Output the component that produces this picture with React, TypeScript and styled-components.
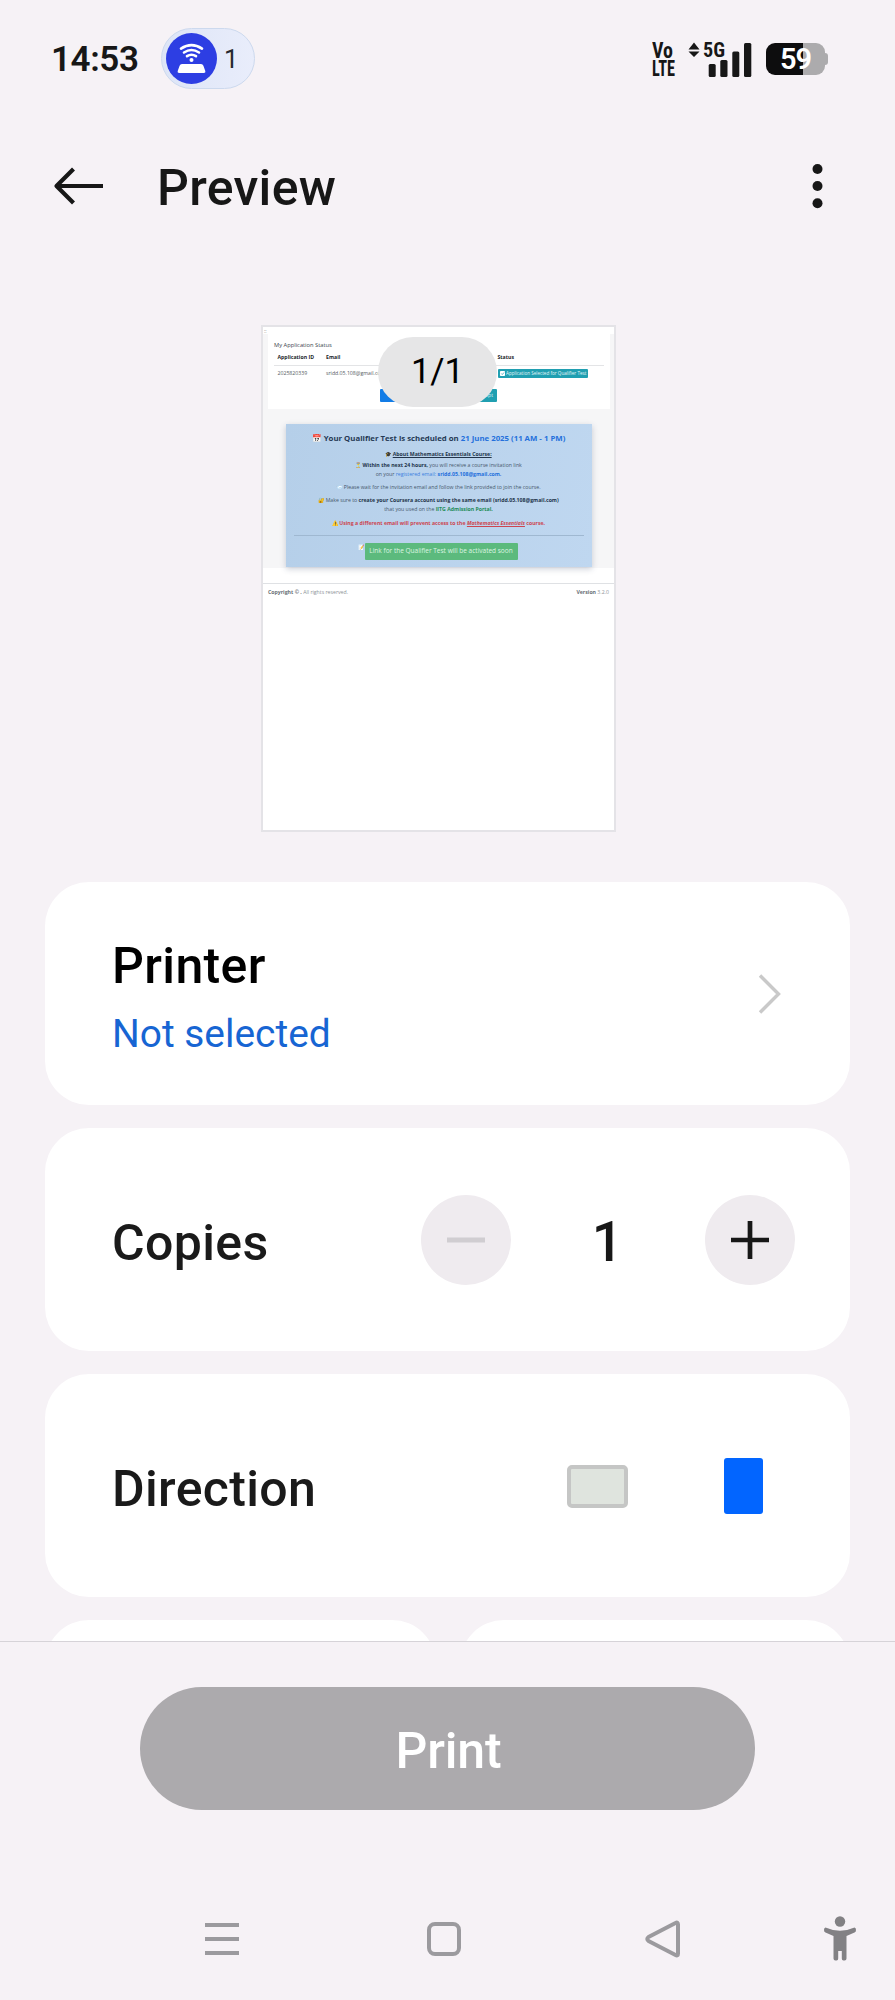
import React from "react";
import styled, { createGlobalStyle } from "styled-components";

const GlobalStyle = createGlobalStyle`
  *, *::before, *::after { box-sizing: border-box; }
  html, body { margin: 0; padding: 0; background: #f6f2f6; }
  body { font-family: Roboto, "Liberation Sans", sans-serif; color: #171717; }
  button { font: inherit; color: inherit; border: 0; margin: 0; padding: 0; }
`;

const Screen = styled.div`
  display: flex;
  flex-direction: column;
  width: 895px;
  height: 2000px;
  overflow: hidden;
  background: #f6f2f6;
`;

/* ---------- status bar ---------- */

const StatusBar = styled.header`
  display: flex;
  align-items: center;
  justify-content: space-between;
  height: 117px;
  padding: 0 67px 0 51px;
`;

const StatusGroup = styled.div`
  display: flex;
  align-items: center;
`;

const Clock = styled.span`
  width: 110px;
  padding-top: 2px;
  font-size: 35px;
  font-weight: 600;
  letter-spacing: -0.4px;
  line-height: 40px;
`;

const HotspotPill = styled.div`
  display: flex;
  align-items: center;
  gap: 7px;
  width: 94px;
  height: 61px;
  padding-left: 4px;
  border: 1px solid #ccd9ee;
  border-radius: 31px;
  background: linear-gradient(90deg, #dde5f7, #e9edfb);
  font-size: 25.5px;
  line-height: 32px;
  color: #26282e;
`;

const CondensedLabel = styled.text<{ $size: number }>`
  font-family: Roboto, sans-serif;
  font-size: ${(p) => p.$size}px;
  font-weight: 700;
  font-stretch: 75%;
  fill: #171717;
`;

const Battery = styled.div`
  display: flex;
  align-items: center;
`;

const BatteryBody = styled.div`
  display: flex;
  align-items: center;
  justify-content: center;
  width: 59px;
  height: 32px;
  border-radius: 9px;
  background: linear-gradient(90deg, #0d0d0e 63%, #acabad 63%);
  color: #fff;
  font-size: 29px;
  font-weight: 600;
  line-height: 32px;
  letter-spacing: -1px;
`;

const BatteryCap = styled.div`
  width: 3px;
  height: 12px;
  border-radius: 0 3px 3px 0;
  background: #acabad;
`;

/* ---------- app bar ---------- */

const AppBar = styled.div`
  display: flex;
  align-items: center;
  height: 138px;
  padding: 0 72px 0 53px;
`;

const Title = styled.h1`
  flex: 1;
  margin: 3px 0 0 54px;
  font-size: 50px;
  font-weight: 500;
  line-height: 60px;
  letter-spacing: 0.3px;
`;

/* ---------- document thumbnail ---------- */

const PreviewArea = styled.section`
  display: flex;
  justify-content: center;
  height: 627px;
  padding: 70px 18px 0 0;
`;

const Sheet = styled.article`
  position: relative;
  width: 355px;
  height: 507px;
  border: 2px solid #e4e3e7;
  background: #fff;
  font-family: "Open Sans", "Noto Sans", sans-serif;
  font-size: 5.2px;
  line-height: 9px;
  color: #3b444d;
  white-space: nowrap;
`;

const PageBadge = styled.div`
  position: absolute;
  top: 10px;
  left: 115px;
  width: 119px;
  height: 70px;
  border-radius: 35px;
  background: #e6e6e7;
  color: #000;
  font-family: Roboto, sans-serif;
  font-size: 34.5px;
  line-height: 69px;
  text-align: center;
`;

const SheetMark = styled.div`
  height: 7px;
  padding-left: 1px;
  font-size: 5px;
  line-height: 9px;
  color: #888;
`;

const SheetBody = styled.div`
  height: 234px;
  padding: 0 4px 0 5px;
  background: #f6f6f7;
`;

const StatusPanel = styled.div`
  height: 75px;
  padding: 7px 6px 0;
  background: #fff;
`;

const PanelTitle = styled.div`
  font-size: 5.75px;
  line-height: 9px;
`;

const TableRow = styled.div<{ $head?: boolean }>`
  display: grid;
  grid-template-columns: 48.5px 171.5px 1fr;
  align-items: center;
  height: ${(p) => (p.$head ? 16 : 15)}px;
  padding-left: 3.5px;
  padding-bottom: ${(p) => (p.$head ? 1 : 0)}px;
  border-bottom: ${(p) => (p.$head ? "1px solid #e3e4e6" : "0")};
  font-weight: ${(p) => (p.$head ? 700 : 400)};
  color: ${(p) => (p.$head ? "#22262a" : "#555c63")};
`;

const StatusTag = styled.span`
  display: flex;
  align-items: center;
  gap: 1px;
  width: 90px;
  height: 9px;
  padding-left: 2.5px;
  border-radius: 1px;
  background: #209fb1;
  color: #e2f6f8;
  font-size: 4.6px;
`;

const ActionRow = styled.div`
  display: flex;
  justify-content: space-between;
  width: 117px;
  margin: 8px 0 0 106px;
`;

const ActionButton = styled.span<{ $tone: string }>`
  width: 56px;
  height: 13px;
  padding: 0 4px;
  border-radius: 1px;
  background: ${(p) => p.$tone};
  color: #dff1fb;
  line-height: 13px;
  text-align: right;
`;

const Notice = styled.div`
  display: flex;
  flex-direction: column;
  align-items: center;
  width: 306px;
  height: 143px;
  margin: 15px 0 0 17.5px;
  padding: 7.5px 8px 0;
  background: linear-gradient(100deg, #b5cfe9, #bfd7f0);
  box-shadow: 0 2px 6px rgba(40, 60, 90, 0.24);
`;

const NoticeTitle = styled.div`
  font-size: 7.8px;
  font-weight: 700;
  line-height: 12px;
  color: #263a55;
`;

const NoticeLine = styled.div<{ $gap?: number; $alert?: boolean }>`
  margin-top: ${(p) => p.$gap ?? 0}px;
  color: ${(p) => (p.$alert ? "#cc4650" : "#46586c")};
  font-weight: ${(p) => (p.$alert ? 700 : 400)};

  b { color: #22344a; }
  u { color: #22344a; font-weight: 700; }
`;

const Tint = styled.span<{ $color: string; $bold?: boolean }>`
  color: ${(p) => p.$color};
  font-weight: ${(p) => (p.$bold ? 700 : "inherit")};
`;

const CourseName = styled.em`
  text-decoration: underline;
`;

const Divider = styled.div`
  width: 290px;
  height: 1px;
  margin: 7.5px 0 7px;
  background: #9fb8d1;
`;

const LinkRow = styled.div`
  display: flex;
  align-items: flex-start;
  gap: 1px;
  margin-right: 2px;
`;

const LinkButton = styled.span`
  width: 153px;
  height: 17px;
  border-radius: 1px;
  background: #5cba7d;
  color: #dcf5e2;
  font-size: 6.5px;
  line-height: 16.5px;
  text-align: center;
`;

const SheetFooter = styled.footer`
  display: flex;
  justify-content: space-between;
  margin-top: 15px;
  padding: 3.5px 5px 0;
  border-top: 1px solid #dfe1e4;
  color: #8d9297;

  b { color: #6a7076; }
`;

/* ---------- settings ---------- */

const Settings = styled.main`
  display: flex;
  flex-direction: column;
  gap: 23px;
  height: 759px;
  padding: 0 45px;
  overflow: hidden;
`;

const Card = styled.section`
  display: flex;
  flex-shrink: 0;
  align-items: center;
  justify-content: space-between;
  height: 223px;
  padding-left: 67px;
  border-radius: 44px;
  background: #fff;
`;

const CardPair = styled.div`
  display: grid;
  grid-template-columns: 1fr 1fr;
  flex-shrink: 0;
  gap: 24px;
`;

const PrinterText = styled.div`
  padding-top: 6px;
`;

const CardTitle = styled.h2<{ $strong?: boolean }>`
  margin: ${(p) => (p.$strong ? "0 0 14px" : "6px 0 0")};
  font-size: 50px;
  font-weight: 500;
  line-height: 60px;
  letter-spacing: 0.35px;
  color: ${(p) => (p.$strong ? "#000" : "#1a1a1a")};
`;

const PrinterValue = styled.p`
  margin: 0;
  font-size: 38.9px;
  line-height: 48px;
  color: #1765d3;
`;

const ChevronSlot = styled.div`
  display: flex;
  padding-right: 69px;
`;

const Stepper = styled.div`
  display: flex;
  align-items: center;
  padding-right: 55.5px;
`;

const StepButton = styled.button`
  display: flex;
  align-items: center;
  justify-content: center;
  width: 90px;
  height: 90px;
  border-radius: 50%;
  background: #efebef;
`;

const CopyCount = styled.span`
  width: 194px;
  padding-top: 4px;
  font-size: 55px;
  font-weight: 500;
  line-height: 64px;
  text-align: center;
`;

const DirectionOptions = styled.div`
  display: flex;
  align-items: center;
  gap: 96px;
  padding: 1px 87px 0 0;
`;

const Landscape = styled.button`
  width: 61px;
  height: 43px;
  border: 4.5px solid #c5c6c5;
  border-radius: 5px;
  background: #dfe4de;
`;

const Portrait = styled.button`
  width: 39px;
  height: 56px;
  border-radius: 3px;
  background: #0265ff;
`;

/* ---------- bottom ---------- */

const BottomBar = styled.footer`
  flex: 1;
  border-top: 1px solid #d6d3d8;
`;

const PrintButton = styled.button`
  display: block;
  width: 615px;
  height: 123px;
  margin: 45px 0 0 140px;
  padding: 5px 0 0 2px;
  border-radius: 62px;
  background: #acaaad;
  color: #fff;
  font-size: 50px;
  font-weight: 500;
  letter-spacing: -0.2px;
`;

const NavBar = styled.nav`
  display: grid;
  grid-template-columns: 222px 222px 216px 138px;
  justify-content: start;
  align-items: center;
  height: 60px;
  margin: 99px 0 0 111px;
`;

const NavItem = styled.div`
  display: flex;
  justify-content: center;
`;

const HotspotIcon = () => (
  <svg width="51" height="51" viewBox="0 0 51 51">
    <circle cx="25.5" cy="25.5" r="25.5" fill="#2d3ee3" />
    <g fill="none" stroke="#fff" strokeWidth="2.6" strokeLinecap="round">
      <path d="M15 15.6q10.5-7 21 0" />
      <path d="M18 19.5q7.5-5 15 0" />
      <path d="M21 23.2q4.5-3 9 0" />
    </g>
    <circle cx="25.5" cy="27" r="2" fill="#fff" />
    <path d="M16 31h19q1.8 0 2.4 1.8l1.8 5q.7 2.200-1.5 2.200H13.300q-2.200 0-1.5-2.200l1.8-5Q14.200 31 16 31Z" fill="#fff" />
  </svg>
);

const NetworkIcons = () => (
  <svg width="114" height="40" viewBox="0 0 114 40">
    <CondensedLabel $size={21.5}>
      <tspan x="0" y="19" textLength="21" lengthAdjust="spacingAndGlyphs">Vo</tspan>
      <tspan x="0" y="36.5" textLength="23" lengthAdjust="spacingAndGlyphs">LTE</tspan>
    </CondensedLabel>
    <path d="M36.500 10.500 42 3.500l5.500 7ZM36.500 12.500h11L42 18Z" fill="#171717" />
    <CondensedLabel $size={20.5} x="51" y="18" textLength="22" lengthAdjust="spacingAndGlyphs">5G</CondensedLabel>
    <g fill="#171717">
      <rect x="56.7" y="25" width="7" height="13" rx="1.5" />
      <rect x="68.3" y="21" width="7.2" height="17" rx="1.5" />
      <rect x="80.3" y="12.5" width="7" height="25.5" rx="1.5" />
      <rect x="92" y="4" width="7.3" height="34" rx="1.5" />
    </g>
  </svg>
);

const BackIcon = () => (
  <svg width="50" height="38" viewBox="0 0 50 38" fill="none" stroke="#171717" strokeWidth="4.2">
    <path d="M50 19H4M20.500 2 3.500 19l17 17" strokeLinejoin="round" />
  </svg>
);

const MoreIcon = () => (
  <svg width="11" height="46" viewBox="0 0 11 46" fill="#171717">
    <circle cx="5.5" cy="6" r="5" />
    <circle cx="5.5" cy="23" r="5" />
    <circle cx="5.5" cy="40.3" r="5" />
  </svg>
);

export default function App() {
  return (
    <Screen>
      <GlobalStyle />
      <StatusBar>
        <StatusGroup>
          <Clock>14:53</Clock>
          <HotspotPill>
            <HotspotIcon />1
          </HotspotPill>
        </StatusGroup>
        <StatusGroup>
          <NetworkIcons />
          <Battery>
            <BatteryBody>59</BatteryBody>
            <BatteryCap />
          </Battery>
        </StatusGroup>
      </StatusBar>

      <AppBar>
        <BackIcon />
        <Title>Preview</Title>
        <MoreIcon />
      </AppBar>

      <PreviewArea>
        <Sheet>
          <SheetMark>::</SheetMark>
          <SheetBody>
            <StatusPanel>
              <PanelTitle>My Application Status</PanelTitle>
              <TableRow $head>
                <span>Application ID</span>
                <span>Email</span>
                <span>Status</span>
              </TableRow>
              <TableRow>
                <span>2025820339</span>
                <span>sridd.05.108@gmail.com</span>
                <StatusTag>
                  <svg width="5" height="5" viewBox="0 0 10 10">
                    <rect width="10" height="10" rx="1.5" fill="#fff" />
                    <path d="m2.500 5 2 2 3.500-4" fill="none" stroke="#209fb1" strokeWidth="1.5" />
                  </svg>
                  Application Selected for Qualifier Test
                </StatusTag>
              </TableRow>
              <ActionRow>
                <ActionButton $tone="#127ce6" />
                <ActionButton $tone="#209fb1">Receipt</ActionButton>
              </ActionRow>
            </StatusPanel>
            <Notice>
              <NoticeTitle>
                📅 Your Qualifier Test is scheduled on <Tint $color="#2470dc">21 June 2025 (11 AM - 1 PM)</Tint>
              </NoticeTitle>
              <NoticeLine $gap={6}>
                🎓 <u>About Mathematics Essentials Course:</u>
              </NoticeLine>
              <NoticeLine $gap={2}>
                ⏳ <b>Within the next 24 hours,</b> you will receive a course invitation link
              </NoticeLine>
              <NoticeLine>
                on your <Tint $color="#3c7fe0">registered email: </Tint>
                <Tint $color="#2470dc" $bold>sridd.05.108@gmail.com.</Tint>
              </NoticeLine>
              <NoticeLine $gap={4}>
                📨 Please wait for the invitation email and follow the link provided to join the course.
              </NoticeLine>
              <NoticeLine $gap={4.5}>
                🔐 Make sure to <b>create your Coursera account using the same email (sridd.05.108@gmail.com)</b>
              </NoticeLine>
              <NoticeLine>
                that you used on the <Tint $color="#1d8b57" $bold>IITG Admission Portal.</Tint>
              </NoticeLine>
              <NoticeLine $gap={4.5} $alert>
                ⚠️ Using a different email will prevent access to the <CourseName>Mathematics Essentials</CourseName> course.
              </NoticeLine>
              <Divider />
              <LinkRow>
                📝<LinkButton>Link for the Qualifier Test will be activated soon</LinkButton>
              </LinkRow>
            </Notice>
          </SheetBody>
          <SheetFooter>
            <span><b>Copyright © .</b> All rights reserved.</span>
            <span><b>Version</b> 3.2.0</span>
          </SheetFooter>
          <PageBadge>1/1</PageBadge>
        </Sheet>
      </PreviewArea>

      <Settings>
        <Card>
          <PrinterText>
            <CardTitle $strong>Printer</CardTitle>
            <PrinterValue>Not selected</PrinterValue>
          </PrinterText>
          <ChevronSlot>
            <svg width="23" height="40" viewBox="0 0 23 40" fill="none" stroke="#c9c9c9" strokeWidth="3.4">
              <path d="m2 1.500 18.500 18.500L2 38.500" />
            </svg>
          </ChevronSlot>
        </Card>
        <Card>
          <CardTitle>Copies</CardTitle>
          <Stepper>
            <StepButton aria-label="Fewer copies">
              <svg width="38" height="38" viewBox="0 0 38 38">
                <path d="M0 19h38" stroke="#d0cdd1" strokeWidth="5" />
              </svg>
            </StepButton>
            <CopyCount>1</CopyCount>
            <StepButton aria-label="More copies">
              <svg width="38" height="38" viewBox="0 0 38 38">
                <path d="M0 19h38M19 0v38" stroke="#171717" strokeWidth="4.7" />
              </svg>
            </StepButton>
          </Stepper>
        </Card>
        <Card>
          <CardTitle>Direction</CardTitle>
          <DirectionOptions>
            <Landscape aria-label="Landscape" />
            <Portrait aria-label="Portrait" />
          </DirectionOptions>
        </Card>
        <CardPair>
          <Card />
          <Card />
        </CardPair>
      </Settings>

      <BottomBar>
        <PrintButton>Print</PrintButton>
        <NavBar>
          <NavItem>
            <svg width="34" height="34" viewBox="0 0 34 34" stroke="#9b9a9e" strokeWidth="4">
              <path d="M0 3h34M0 17h34M0 31h34" />
            </svg>
          </NavItem>
          <NavItem>
            <svg width="34" height="34" viewBox="0 0 34 34" fill="none" stroke="#9b9a9e" strokeWidth="4">
              <rect x="2" y="2" width="30" height="30" rx="6" />
            </svg>
          </NavItem>
          <NavItem>
            <svg width="36" height="38" viewBox="0 0 36 38" fill="none" stroke="#9b9a9e" strokeWidth="4" strokeLinejoin="round">
              <path d="M30.500 3Q33 1.500 33 4.500v29q0 3-2.500 1.500L3.500 21q-2.500-2 0-4Z" />
            </svg>
          </NavItem>
          <NavItem>
            <svg width="34" height="46" viewBox="0 0 34 46" fill="#828184">
              <circle cx="17" cy="5.5" r="5.2" />
              <path d="M2.500 11.500Q17 18 31.500 11.500q1.500 0 1.500 2.500 0 2-1.500 2.500L23.500 20v22.500q0 2-2 2h-1q-1.700 0-1.700-2V35h-3.600v7.500q0 2-1.700 2h-1q-2 0-2-2V20l-8-3.500Q1 16 1 14q0-2.500 1.500-2.500Z" />
            </svg>
          </NavItem>
        </NavBar>
      </BottomBar>
    </Screen>
  );
}
